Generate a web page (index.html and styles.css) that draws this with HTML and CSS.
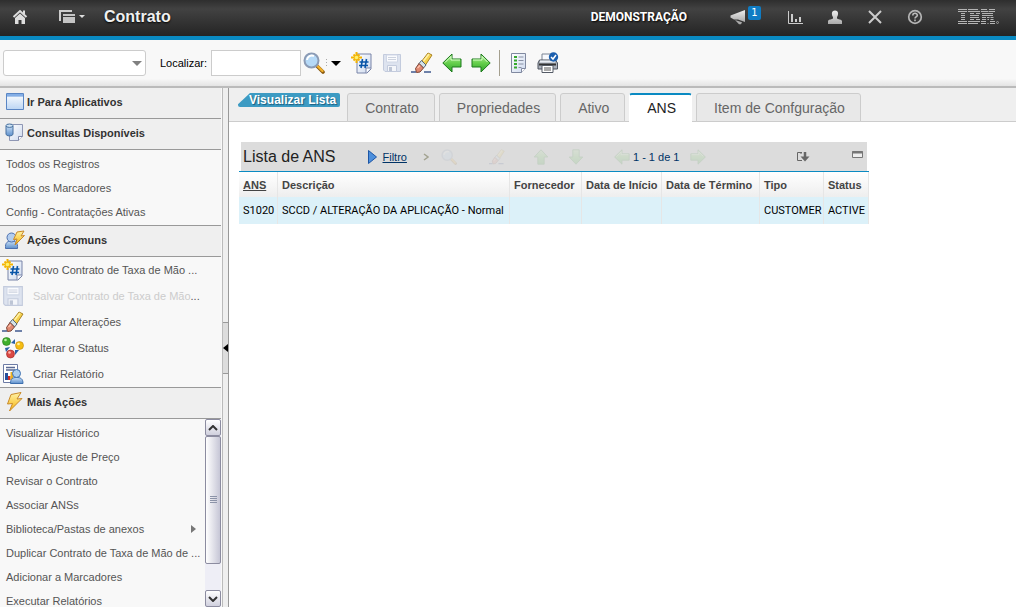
FILE: index.html
```html
<!DOCTYPE html>
<html lang="pt-BR">
<head>
<meta charset="utf-8">
<title>Contrato</title>
<link rel="stylesheet" href="styles.css">
</head>
<body>
<svg class="defs" aria-hidden="true">
  <defs>
    <linearGradient id="gGreen" x1="0" y1="0" x2="0" y2="1"><stop offset="0" stop-color="#b9f0a0"/><stop offset=".5" stop-color="#66cf4c"/><stop offset="1" stop-color="#2fa52a"/></linearGradient>
    <linearGradient id="gPage" x1="0" y1="0" x2="1" y2="1"><stop offset="0" stop-color="#fff"/><stop offset="1" stop-color="#cdd9ee"/></linearGradient>
    <linearGradient id="gWin" x1="0" y1="0" x2="0" y2="1"><stop offset="0" stop-color="#fff"/><stop offset="1" stop-color="#bcd6f4"/></linearGradient>
    <linearGradient id="gBolt" x1="0" y1="0" x2="0" y2="1"><stop offset="0" stop-color="#fff3a8"/><stop offset="1" stop-color="#f6b40c"/></linearGradient>
    <linearGradient id="gBlue" x1="0" y1="0" x2="0" y2="1"><stop offset="0" stop-color="#c9e0f7"/><stop offset="1" stop-color="#5d8fcb"/></linearGradient>
    <linearGradient id="gGrey" x1="0" y1="0" x2="0" y2="1"><stop offset="0" stop-color="#eee"/><stop offset="1" stop-color="#aaa"/></linearGradient>
  </defs>
  <symbol id="search" viewBox="0 0 22 22">
    <path d="M14 14l6 6" stroke="#8a5a10" stroke-width="3.600" stroke-linecap="round"/>
    <path d="M14.500 14l5 5" stroke="#f3b22d" stroke-width="2.400" stroke-linecap="round"/>
    <circle cx="8.500" cy="8.500" r="7" fill="#b5d9f7" stroke="#8b9bb5" stroke-width="2"/>
    <path d="M4 8a5 5 0 0 1 7-4" fill="none" stroke="#fff" stroke-width="2"/>
  </symbol>
  <symbol id="new" viewBox="0 0 22 22">
    <path d="M6 2h14v15l-4 4H6z" fill="url(#gPage)" stroke="#7884a8"/>
    <path d="M20 16h-5v5" fill="#fff" stroke="#7884a8"/>
    <path d="M11.500 7l-1.500 9M15.500 7l-1.500 9M8.500 10h9M8 13.500h9" stroke="#0a56a8" stroke-width="1.600" fill="none"/>
    <path d="M5.500 0v11M0 5.500h11" stroke="#f4b400" stroke-width="2"/>
    <path d="M2.500 2.500l6 6M8.500 2.500l-6 6" stroke="#f4b400" stroke-width="1.800"/>
    <circle cx="5.500" cy="5.500" r="1.800" fill="#fff36b"/>
  </symbol>
  <symbol id="save" viewBox="0 0 20 20">
    <path d="M1.500 1.500h17v17H3l-1.500-1.500z" fill="#dde3ef" stroke="#c3cbdd"/>
    <path d="M4.500 2h11v7h-11z" fill="#fafbfe" stroke="#d0d7e6"/>
    <path d="M6 4.500h8M6 6.500h8" stroke="#cdd3df"/>
    <path d="M5.500 12.500h9v6h-9z" fill="#f4f6fa" stroke="#c3cbdd"/>
    <path d="M7 14h3v4H7z" fill="#bdc5d5"/>
  </symbol>
  <symbol id="eraser" viewBox="0 0 22 22">
    <path d="M0 20h5M13 20h7" stroke="#40598f" stroke-width="1.600"/>
    <path d="M10.500 9.500L17 1l4 2-6.500 10z" fill="#f6d24e" stroke="#a88223"/>
    <path d="M12.500 9l5.500-7" fill="none" stroke="#fff1a6" stroke-width="1.600"/>
    <path d="M8 11.500l2.500-3 4.500 4.500-2.500 3z" fill="#d3e2e8" stroke="#567"/>
    <path d="M4.500 16.500l3.500-5 4.500 4.500-3.500 4-3.500.5z" fill="#e08a72" stroke="#7c4436"/>
    <path d="M6.500 16l2.500-2.500" stroke="#ffc0aa" stroke-width="1.500"/>
  </symbol>
  <symbol id="left" viewBox="0 0 20 20"><path d="M.8 10L10 1v5h9v8h-9v5z" fill="url(#gGreen)" stroke="#1c7a1c" stroke-linejoin="round"/><path d="M3 9.500l6-6V7h9" fill="none" stroke="#d8ffc8"/></symbol>
  <symbol id="right" viewBox="0 0 20 20"><path d="M19.200 10L10 1v5H1v8h9v5z" fill="url(#gGreen)" stroke="#1c7a1c" stroke-linejoin="round"/><path d="M2 7h9V3.500l5.500 5.500" fill="none" stroke="#d8ffc8"/></symbol>
  <symbol id="up" viewBox="0 0 20 20"><path d="M10 1l8.500 9H14v9H6v-9H1.500z" fill="url(#gGreen)" stroke="#1c7a1c"/></symbol>
  <symbol id="down" viewBox="0 0 20 20"><path d="M10 19l8.500-9H14V1H6v9H1.500z" fill="url(#gGreen)" stroke="#1c7a1c"/></symbol>
  <symbol id="report" viewBox="0 0 18 22">
    <path d="M1.500 1.500h14v15l-4 4h-10z" fill="url(#gPage)" stroke="#8089a0"/>
    <path d="M15.500 16.500h-4v4" fill="#fff" stroke="#8089a0"/>
    <path d="M4 4h3v2H4zM4 7.500h3v2H4zM4 11h3v2H4zM4 14.500h3v2H4z" fill="#35a92c"/>
    <path d="M8.500 5h5M8.500 8.500h5M8.500 12h5M8.500 15.500h3" stroke="#8790a4"/>
  </symbol>
  <symbol id="printer" viewBox="0 0 22 22">
    <path d="M5 2h9v8H5z" fill="#f7f9fd" stroke="#7b8494"/>
    <path d="M2.500 8h16l2 3v6H1v-6z" fill="#abb1bb" stroke="#4d535e"/>
    <path d="M3 9.500h15" stroke="#e9edf3" stroke-width="2"/>
    <path d="M2 12.500h17" stroke="#333" stroke-width="2"/>
    <path d="M5 13.500h11v7H5z" fill="#fff" stroke="#545b66"/>
    <path d="M7 16h7M7 18h7" stroke="#555"/>
    <circle cx="16.500" cy="5" r="4.700" fill="#1b5fae"/>
    <path d="M14 5l2 2 3-4" fill="none" stroke="#fff" stroke-width="1.500"/>
  </symbol>
  <symbol id="window" viewBox="0 0 20 20"><path d="M1.500 1.500h17v16h-17z" fill="url(#gWin)" stroke="#5a86c4"/><path d="M2 2h16v2H2z" fill="#83aee6"/><path d="M2 4.500h16" stroke="#a9c6ec"/></symbol>
  <symbol id="queries" viewBox="0 0 20 20">
    <path d="M7.500 1.500h10v12l-4 4h-9V2z" fill="url(#gPage)" stroke="#8f97b4"/>
    <path d="M17.500 13.500h-4v4" fill="#fff" stroke="#7e87a8"/>
    <path d="M1 3v8c0 2.500 7 2.500 7 0V3z" fill="url(#gBlue)" stroke="#466f9e"/>
    <ellipse cx="4.500" cy="2.700" rx="3.500" ry="1.700" fill="#cfe4f5" stroke="#466f9e"/>
  </symbol>
  <symbol id="bolt" viewBox="0 0 20 20"><path d="M6 2.500l10-2-4 6.500 5-.5L4.500 19l3-7.500-5 .5z" fill="url(#gBolt)" stroke="#c98a2a" stroke-linejoin="round"/></symbol>
  <symbol id="userbolt" viewBox="0 0 20 20">
    <path d="M.5 18.500c-.5-6 2-7.500 6-7.500s6.500 1.500 6 7.500z" fill="url(#gBlue)" stroke="#4c6fae"/>
    <circle cx="6.500" cy="7.500" r="4.500" fill="#b3cdee" stroke="#4c6fae"/>
    <path d="M12 2l7-1-3 5 3.500-.5L10 15l2-6-3.500.5z" fill="url(#gBolt)" stroke="#c98a2a" stroke-linejoin="round"/>
  </symbol>
  <symbol id="status" viewBox="0 0 22 22">
    <path d="M9 6l4-4v5zM3 11l5-1-4 5zM13 18v-5h4z" fill="#2c62a8"/>
    <circle cx="4.500" cy="4.500" r="4" fill="#3fae2c" stroke="#24781a" stroke-width=".6"/><circle cx="3.500" cy="3" r="1.300" fill="#baf0a4"/>
    <circle cx="17.500" cy="8.500" r="4" fill="#f5bd12" stroke="#bd860a" stroke-width=".6"/><circle cx="16.500" cy="7" r="1.300" fill="#fff2a0"/>
    <circle cx="8.500" cy="17" r="4" fill="#da4a45" stroke="#9c1d1d" stroke-width=".6"/><circle cx="7.500" cy="15.500" r="1.300" fill="#ffb4ab"/>
  </symbol>
  <symbol id="createreport" viewBox="0 0 22 22">
    <path d="M1.500 1.500h14v18h-14z" fill="#fff" stroke="#6c7ba5"/>
    <path d="M4 4.500h9M4 7h9" stroke="#5a6993" stroke-width="1.500"/>
    <path d="M3 10h3v7H3z" fill="#274f9c"/><path d="M6 13h2.500v4H6z" fill="#cf2a21"/><path d="M8.500 9H11v8H8.500z" fill="#edb21e"/>
    <path d="M8.500 20.500c0-5 2-6 6-6s6.500 1 6.500 6z" fill="url(#gBlue)" stroke="#3d6fae"/>
    <circle cx="14.500" cy="10.500" r="4" fill="#aaceef" stroke="#3d6fae"/>
  </symbol>
</svg>

<header class="topbar">
  <button class="bare home" aria-label="Início"><svg width="16" height="16" viewBox="0 0 16 16"><path d="M1.500 8L8 2l6.500 6M12 1.500V5" fill="none" stroke="#ddd" stroke-width="2"/><path d="M3 9l5-4.500L13 9v6H9.500v-4h-3v4H3z" fill="#ddd"/></svg></button>
  <button class="bare windows" aria-label="Janelas"><svg width="28" height="16" viewBox="0 0 28 16"><path d="M2 12V2h12" fill="none" stroke="#ccc" stroke-width="2"/><path d="M5 5h12v2H5zM5 8h12v6H5z" fill="#c4c4c4"/><path d="M21 6h6l-3 3z" fill="#ddd"/></svg></button>
  <h1>Contrato</h1>
  <span class="user">DEMONSTRAÇÃO</span>
  <div class="topicons">
    <button class="bare" aria-label="Avisos"><svg width="16" height="16" viewBox="0 0 16 16"><path d="M15 1v12L8 10.500H4L.5 8.500v-2z" fill="url(#gGrey)"/><path d="M5 11l7 2.200-1 2H9z" fill="#aaa"/></svg><span class="badge">1</span></button>
    <button class="bare" aria-label="Gráficos"><svg width="16" height="16" viewBox="0 0 16 16"><path d="M1.500 2v12.500H16" fill="none" stroke="#ccc"/><path d="M4 5h2v8H4zM8 10h2v3H8zM12 8h2v5h-2z" fill="#ccc"/></svg></button>
    <button class="bare" aria-label="Perfil"><svg width="16" height="16" viewBox="0 0 16 16"><path d="M1 15v-3c1-2 4-1.500 5-2.500V8C4.500 6 4 1.500 8 1.500S11.500 6 10 8v1.500c1 1 4 .5 5 2.500v3z" fill="url(#gGrey)"/></svg></button>
    <button class="bare" aria-label="Fechar"><svg width="16" height="16" viewBox="0 0 16 16"><path d="M2 2l12 12M14 2L2 14" stroke="#ccc" stroke-width="2"/></svg></button>
    <button class="bare" aria-label="Ajuda"><svg width="16" height="16" viewBox="0 0 16 16"><circle cx="8" cy="8" r="6.300" fill="none" stroke="#b5b5b5" stroke-width="1.700"/><path d="M5.800 6.500c0-3 4.500-2.800 4.500-.3C10.300 8 8 7.800 8 9.500M8 10.500v1.700" fill="none" stroke="#bbb" stroke-width="1.600"/></svg></button>
  </div>
  <svg class="ibm" role="img" aria-label="IBM" width="42" height="17" viewBox="0 0 42 17"><path stroke="#b4b4b4" d="M0 .5h9M0 2.500h9M3 4.500h4M3 6.500h4M3 8.500h4M3 10.500h4M0 12.500h9M0 14.500h9M10 .5h10M10 2.500h12M12 4.500h4M18 4.500h4M12 6.500h9M12 8.500h9M12 10.500h4M18 10.500h4M10 12.500h12M10 14.500h10M23 .5h6M31 .5h6M23 2.500h7M30.500 2.500h6.500M24 4.500h11M24 6.500h11M24 8.500h4M29 8.500h2.500M32.500 8.500h3M24 10.500h4M29.500 10.500h1.500M32.500 10.500h3M23 12.500h5M32 12.500h5M23 14.500h5M29.500 14.500h1M32 14.500h5"/><circle cx="39.500" cy="13.500" r="1" fill="none" stroke="#aaa" stroke-width=".8"/></svg>
</header>

<div class="toolbar">
  <div class="combo"><select aria-label="Ação"><option></option></select><svg width="10" height="6" viewBox="0 0 10 6"><path d="M0 0h10L5 5z" fill="#808080"/></svg></div>
  <label for="find">Localizar:</label>
  <input id="find" type="text">
  <button class="bare" aria-label="Pesquisar"><svg width="22" height="22"><use href="#search"/></svg></button>
  <button class="bare more" aria-label="Mais pesquisas"><svg width="16" height="12" viewBox="0 0 16 12"><path d="M1.500 2v9" stroke="#aaa" stroke-dasharray="1 2"/><path d="M6 4h10l-5 5z"/></svg></button>
  <div class="tools">
    <button class="bare" aria-label="Novo"><svg width="22" height="22"><use href="#new"/></svg></button>
    <button class="bare" aria-label="Salvar"><svg width="20" height="20"><use href="#save"/></svg></button>
    <button class="bare" aria-label="Limpar"><svg width="22" height="22"><use href="#eraser"/></svg></button>
    <button class="bare" aria-label="Anterior"><svg width="20" height="20"><use href="#left"/></svg></button>
    <button class="bare" aria-label="Próximo"><svg width="20" height="20"><use href="#right"/></svg></button>
  </div>
  <div class="tools extra">
    <button class="bare" aria-label="Relatórios"><svg width="18" height="22"><use href="#report"/></svg></button>
    <button class="bare" aria-label="Imprimir"><svg width="22" height="22"><use href="#printer"/></svg></button>
  </div>
</div>

<div class="body">
  <nav class="sidebar">
    <h2><svg width="20" height="20"><use href="#window"/></svg>Ir Para Aplicativos</h2>
    <h2><svg width="20" height="20"><use href="#queries"/></svg>Consultas Disponíveis</h2>
    <ul class="links">
      <li><a href="#">Todos os Registros</a></li>
      <li><a href="#">Todos os Marcadores</a></li>
      <li><a href="#">Config - Contratações Ativas</a></li>
    </ul>
    <h2 class="ruled"><svg width="20" height="20"><use href="#userbolt"/></svg>Ações Comuns</h2>
    <ul class="actions">
      <li><a href="#"><svg width="22" height="22"><use href="#new"/></svg>Novo Contrato de Taxa de Mão ...</a></li>
      <li><a href="#" class="off"><svg width="22" height="22"><use href="#save"/></svg><span>Salvar Contrato de Taxa de Mão<b>...</b></span></a></li>
      <li><a href="#"><svg width="22" height="22"><use href="#eraser"/></svg>Limpar Alterações</a></li>
      <li><a href="#"><svg width="22" height="22"><use href="#status"/></svg>Alterar o Status</a></li>
      <li><a href="#"><svg width="22" height="22"><use href="#createreport"/></svg>Criar Relatório</a></li>
    </ul>
    <h2 class="ruled"><svg width="20" height="20"><use href="#bolt"/></svg>Mais Ações</h2>
    <div class="scroller">
      <ul class="links">
        <li><a href="#">Visualizar Histórico</a></li>
        <li><a href="#">Aplicar Ajuste de Preço</a></li>
        <li><a href="#">Revisar o Contrato</a></li>
        <li><a href="#">Associar ANSs</a></li>
        <li><a href="#">Biblioteca/Pastas de anexos<svg width="6" height="8" viewBox="0 0 6 8"><path d="M0 0l5 4-5 4z" fill="#777"/></svg></a></li>
        <li><a href="#">Duplicar Contrato de Taxa de Mão de ...</a></li>
        <li><a href="#">Adicionar a Marcadores</a></li>
        <li><a href="#">Executar Relatórios</a></li>
      </ul>
      <div class="scrollbar">
        <button aria-label="Rolar para cima"><svg width="10" height="6" viewBox="0 0 10 6"><path d="M1 5l4-4 4 4" fill="none" stroke="#333" stroke-width="2"/></svg></button>
        <div class="track"><div class="thumb"><svg width="7" height="8" viewBox="0 0 7 8"><path d="M0 .5h7M0 2.500h7M0 4.500h7M0 6.500h7" stroke="#8c93a8"/></svg></div></div>
        <button aria-label="Rolar para baixo"><svg width="10" height="6" viewBox="0 0 10 6"><path d="M1 1l4 4 4-4" fill="none" stroke="#333" stroke-width="2"/></svg></button>
      </div>
    </div>
  </nav>
  <div class="splitter"><button aria-label="Recolher painel"><svg width="5" height="8" viewBox="0 0 5 8"><path d="M5 0v8L0 4z"/></svg></button></div>

  <main>
    <div class="tabs">
      <a class="back" href="#">Visualizar Lista</a>
      <button class="tab">Contrato</button>
      <button class="tab">Propriedades</button>
      <button class="tab">Ativo</button>
      <button class="tab active">ANS</button>
      <button class="tab">Item de Confguração</button>
    </div>
    <section class="list">
      <div class="listbar">
        <h3>Lista de ANS</h3>
        <a class="filter" href="#"><svg width="9" height="14" viewBox="0 0 9 14"><path d="M.5 .5L8.500 7l-8 6.500z" fill="#4d8fdc" stroke="#1d56a5"/></svg><span>Filtro</span></a>
        <svg class="chev" width="6" height="8" viewBox="0 0 6 8"><path d="M1 1l4 3-4 3" fill="none" stroke="#a3a391" stroke-width="1.500"/></svg>
        <div class="ghosts">
          <button class="bare" aria-label="Pesquisar"><svg width="16" height="16"><use href="#search"/></svg></button>
          <button class="bare" aria-label="Limpar filtro"><svg width="16" height="16"><use href="#eraser"/></svg></button>
        </div>
        <div class="ghosts near">
          <button class="bare" aria-label="Linha anterior"><svg width="16" height="16"><use href="#up"/></svg></button>
          <button class="bare" aria-label="Próxima linha"><svg width="16" height="16"><use href="#down"/></svg></button>
        </div>
        <div class="pager">
          <button class="bare" aria-label="Página anterior"><svg width="16" height="16"><use href="#left"/></svg></button>
          <span>1 - 1 de 1</span>
          <button class="bare" aria-label="Próxima página"><svg width="16" height="16"><use href="#right"/></svg></button>
        </div>
        <button class="bare dl" aria-label="Download"><svg width="14" height="12" viewBox="0 0 14 12"><path d="M6 1.500H1.500v8H6" fill="none" stroke="#666"/><path d="M5 1v2" stroke="#666"/><path d="M9 1v6" stroke="#666" stroke-width="2.500"/><path d="M4.500 5.500h9L9 10.500z" fill="#666"/></svg></button>
        <button class="bare min" aria-label="Minimizar"><svg width="11" height="8" viewBox="0 0 11 8"><path d="M.5 .5h10v6H.5z" fill="#eee" stroke="#777"/><path d="M0 1.500h11" stroke="#777" stroke-width="2"/></svg></button>
      </div>
      <table>
        <colgroup><col class="c1"><col class="c2"><col class="c3"><col class="c4"><col class="c5"><col class="c6"><col class="c7"></colgroup>
        <thead><tr><th><a href="#">ANS</a></th><th>Descrição</th><th>Fornecedor</th><th>Data de Início</th><th>Data de Término</th><th>Tipo</th><th>Status</th></tr></thead>
        <tbody><tr><td>S1020</td><td>SCCD / ALTERAÇÃO DA APLICAÇÃO - Normal</td><td></td><td></td><td></td><td>CUSTOMER</td><td>ACTIVE</td></tr></tbody>
      </table>
    </section>
  </main>
</div>
</body>
</html>
```

FILE: styles.css
```css
* { box-sizing: border-box; }
body {
  margin: 0;
  height: 100vh;
  overflow: hidden;
  display: flex;
  flex-direction: column;
  background: #fff;
  color: #000;
  font: 11px "Liberation Sans", Arial, sans-serif;
}
h1, h2, h3, ul { margin: 0; padding: 0; }
ul { list-style: none; }
a { color: inherit; text-decoration: none; }
button, input, select { font: inherit; color: inherit; margin: 0; }
svg { display: block; flex: none; }
.defs { position: absolute; width: 0; height: 0; }
.bare { position: relative; display: block; flex: none; padding: 0; border: 0; background: none; }

.topbar {
  flex: none;
  display: flex;
  align-items: center;
  height: 40px;
  padding: 0 16px 2px 12px;
  border-bottom: 4px solid #0a8ac2;
  background: linear-gradient(#2e2e2e, #424242 25%, #242424);
  color: #fff;
}
.windows { margin-left: 30px; }
.topbar h1 { flex: 1; margin-left: 18px; font-size: 16px; color: #f0f0f0; text-shadow: 0 1px 2px #000; }
.user { font: bold 12px Roboto, sans-serif; text-shadow: 1px 1px 2px #000; }
.topicons { display: flex; gap: 24px; margin: 0 35px 0 43px; }
.topicons .bare:first-child { margin-right: 17px; }
.badge {
  position: absolute;
  top: -3px;
  left: 18px;
  width: 13px;
  border-radius: 2px;
  background: #0f7cc4;
  color: #fff;
  font: 10px/14px "DejaVu Sans", sans-serif;
  text-align: center;
}

.toolbar {
  flex: none;
  display: flex;
  align-items: center;
  height: 48px;
  padding: 0 3px;
  border-bottom: 2px solid #bbb;
  background: linear-gradient(#f8f8f8 84%, #e4e4e4);
}
.combo { position: relative; width: 143px; margin-right: 14px; }
.combo select, .toolbar input {
  display: block;
  width: 100%;
  height: 26px;
  border: 1px solid #ccc;
  border-radius: 3px;
  background: #fff;
  appearance: none;
}
.combo svg { position: absolute; right: 4px; top: 11px; }
.toolbar label { margin-right: 4px; }
.toolbar input { width: 90px; margin-right: 2px; border-radius: 0; }
.tools { display: flex; align-items: center; gap: 9px; margin-left: 10px; }
.extra { margin-left: 8px; padding: 2px 0 2px 10px; border-left: 1px solid #a49f8e; }

.body { flex: 1; min-height: 0; display: flex; }
.sidebar {
  flex: none;
  display: flex;
  flex-direction: column;
  width: 222px;
  padding-right: 1px;
  background: #f8f8f8;
  color: #555;
}
.sidebar h2 {
  flex: none;
  display: flex;
  align-items: center;
  gap: 2px;
  height: 31px;
  padding: 0 5px 2px;
  border-bottom: 1px solid #999;
  background: #efefef;
  color: #333;
  font-size: 11px;
}
.sidebar .ruled { height: 32px; border-top: 1px solid #999; }
.links { flex: none; padding: 2px 0 1px; }
.links a { display: flex; align-items: center; justify-content: space-between; height: 24px; padding: 0 8px 0 6px; white-space: nowrap; }
.actions a { display: flex; align-items: center; gap: 9px; height: 26px; padding: 0 2px; white-space: nowrap; }
.actions .off { color: #ccc; }
.off b { color: #555; font-weight: normal; }
.scroller { flex: 1; min-height: 0; display: flex; overflow: hidden; }
.scroller .links { flex: 1; min-width: 0; }
.scrollbar { flex: none; display: flex; flex-direction: column; width: 16px; background: #eeeef6; }
.scrollbar button {
  flex: none;
  display: grid;
  place-items: center;
  height: 17px;
  padding: 0;
  border: 1px solid #8c8ca0;
  border-radius: 2px;
  background: linear-gradient(#fff, #d0d0de);
}
.track { flex: 1; }
.thumb {
  display: grid;
  place-items: center;
  height: 83%;
  border: 1px solid #8c8ca0;
  border-radius: 2px;
  background: linear-gradient(90deg, #fff, #c6c6d6);
}
.splitter {
  flex: none;
  display: flex;
  align-items: center;
  width: 7px;
  border: solid #999;
  border-width: 0 1px;
  border-left-color: #bbb;
  background: #efefef;
}
.splitter button {
  display: grid;
  place-items: center;
  width: 5px;
  height: 52px;
  padding: 0;
  border: solid #999;
  border-width: 1px 0;
  background: #ddd;
}

main { flex: 1; min-width: 0; }
.tabs {
  display: flex;
  align-items: flex-start;
  gap: 4px;
  height: 34px;
  padding: 5px 9px 0;
  border-bottom: 1px solid #ccc;
  background: #efefef;
}
.back {
  height: 14px;
  margin-right: 3px;
  padding: 0 4px 0 11px;
  border-radius: 2px;
  clip-path: polygon(0 80%, 12px 0, 100% 0, 100% 100%, 0 100%);
  background: #3d9bc3;
  color: #fff;
  font-size: 12px;
  font-weight: bold;
  line-height: 14px;
  text-shadow: 1px 1px 1px #1a5f80;
  white-space: nowrap;
}
.tab {
  height: 29px;
  padding: 0 15px 0 17px;
  border: 1px solid #ccc;
  border-radius: 3px 3px 0 0;
  background: #e8e8e8;
  color: #666;
  font-size: 14px;
  white-space: nowrap;
}
.tab.active { border-color: #fff; border-top: 2px solid #0a8ac2; background: #fff; color: #222; }

.list { width: 630px; margin: 20px 0 0 10px; }
.listbar {
  display: flex;
  align-items: center;
  height: 29px;
  margin: 0 2px;
  padding: 0 4px 0 2px;
  background: #dcdcdc;
}
.listbar h3 { font-size: 16px; font-weight: normal; color: #222; margin-right: 32px; }
.filter { display: flex; align-items: center; gap: 6px; color: #036; text-decoration: underline; }
.chev { margin-left: 16px; }
.ghosts { display: flex; gap: 32px; margin-left: 12px; opacity: .12; }
.ghosts.near { gap: 19px; margin-left: 28px; }
.pager { display: flex; align-items: center; gap: 3px; margin-left: 30px; color: #036; }
.pager span { margin-right: 8px; }
.pager svg { opacity: .12; }
.dl { margin-left: auto; }
.min { margin: 0 0 4px 42px; }

table { width: 100%; table-layout: fixed; border-collapse: separate; border-spacing: 0; border-top: 1px solid #0a8ac2; }
th, td { padding: 0 3px 0 4px; border-right: 1px solid #e6e6e6; text-align: left; white-space: nowrap; }
th { height: 25px; background: linear-gradient(#fff, #eee); color: #444; }
th a { text-decoration: underline; }
td { height: 27px; background: #dcf1f9; font-family: Roboto, sans-serif; }
.c1 { width: 39px; }
.c2 { width: 232px; }
.c3 { width: 72px; }
.c4 { width: 80px; }
.c5 { width: 98px; }
.c6 { width: 64px; }
.c7 { width: 45px; }
```
